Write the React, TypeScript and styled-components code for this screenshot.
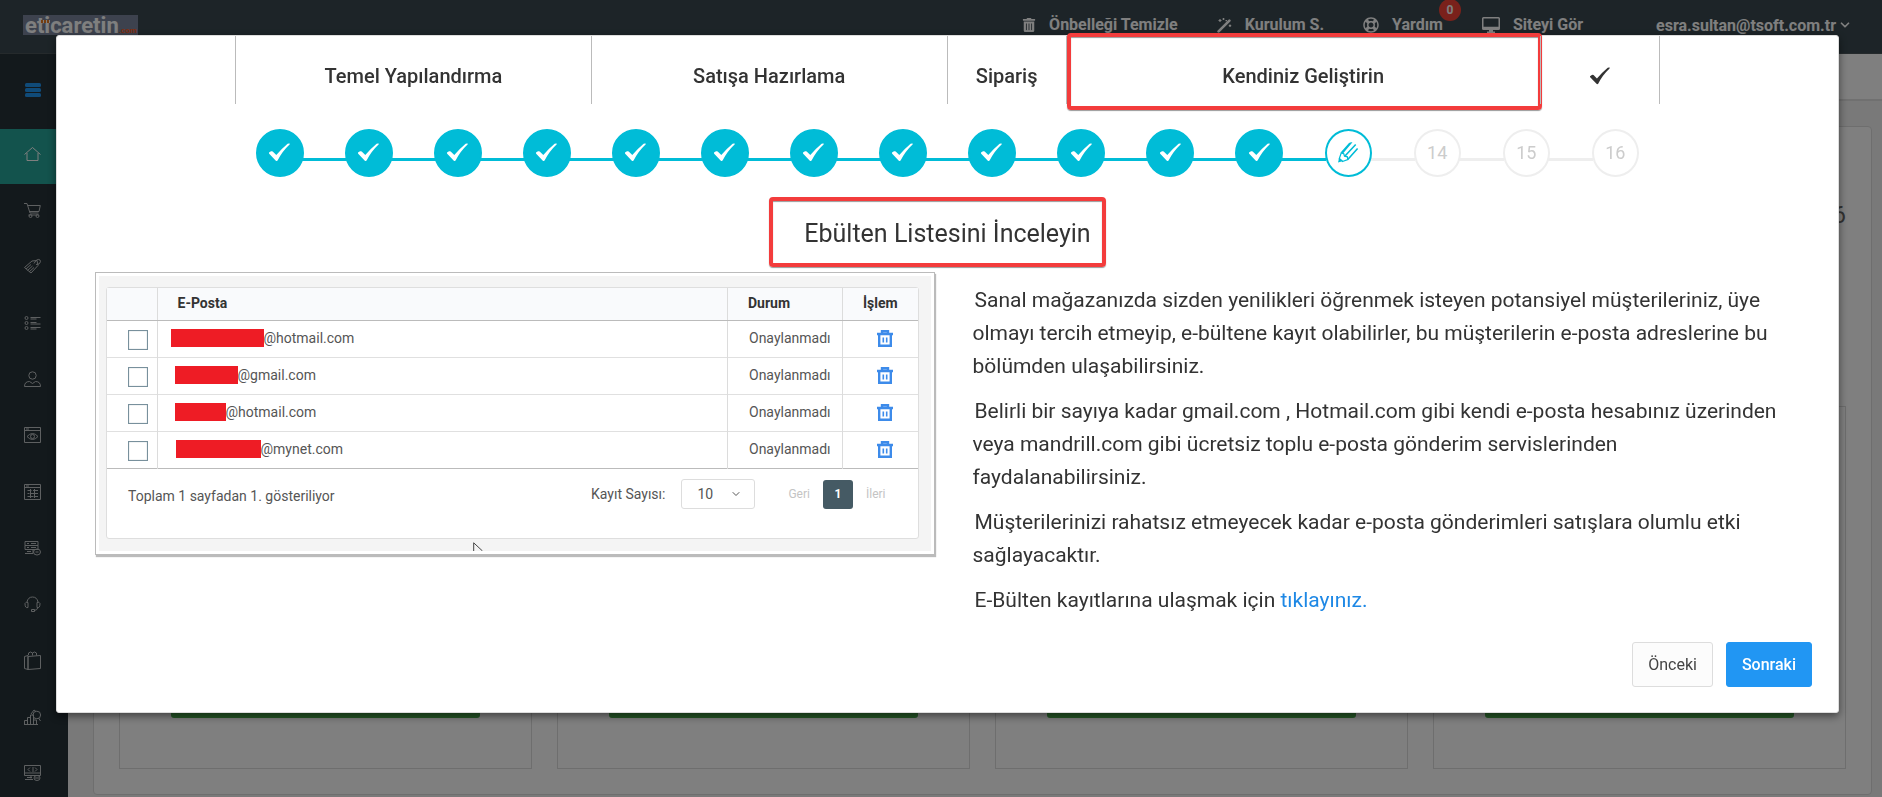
import React from 'react';
import styled, { createGlobalStyle, css } from 'styled-components';
import { FaRegLifeRing, FaTrashAlt } from 'react-icons/fa';
import { ChevronDown } from 'lucide-react';

const GlobalStyle = createGlobalStyle`
  *, *::before, *::after { box-sizing: border-box; }
  body {
    margin: 0;
    font-family: Roboto, "Noto Sans", sans-serif;
    font-size: 16px;
    color: #333;
    background: #f3f3f3;
  }
  button, input, select { font: inherit; }
  a { text-decoration: none; }
`;

/* ---------- Admin page ---------- */

const Page = styled.div`
  height: 100vh;
  overflow: hidden;
  display: flex;
  flex-direction: column;
`;

const Header = styled.header`
  flex: none;
  height: 54px;
  padding: 15px 30px 0 23px;
  display: flex;
  align-items: flex-start;
  justify-content: space-between;
  background: #3a4950;
  border-bottom: 1px solid #4a5459;
`;

const Logo = styled.a`
  position: relative;
  display: flex;
  align-items: baseline;
  width: 115px;
  height: 20px;
  padding-left: 2px;
  background: #7a859c;
  color: #fff;
  font-size: 22px;
  font-weight: 700;
  line-height: 22px;
`;

const LogoSuffix = styled.span`
  color: #ff5a20;
  font-size: 8px;
`;

const Awning = styled.span`
  position: absolute;
  top: 5px;
  left: 18px;
  width: 9px;
  height: 3px;
  background: repeating-linear-gradient(90deg, #ea7a20 0 2px, #fff 2px 3px);
`;

const HeaderNav = styled.nav`
  display: flex;
  align-items: center;
  gap: 39px;
  height: 20px;
`;

const HeaderLink = styled.a`
  position: relative;
  display: flex;
  align-items: center;
  gap: 13px;
  color: #fff;
  font-weight: 700;
  line-height: 20px;
  white-space: nowrap;
`;

const UserMenu = styled.button`
  display: flex;
  align-items: center;
  gap: 2px;
  margin-left: 34px;
  padding: 0;
  border: 0;
  background: none;
  color: #fff;
  font-weight: 700;
`;

const Badge = styled.span`
  position: absolute;
  top: -16px;
  right: -18px;
  width: 22px;
  height: 22px;
  border-radius: 50%;
  background: #f44336;
  font-size: 12px;
  line-height: 22px;
  text-align: center;
`;

const Columns = styled.div`
  flex: 1;
  min-height: 0;
  display: flex;
`;

const Sidebar = styled.nav`
  flex: 0 0 68px;
  overflow: hidden;
  background: #263238;
`;

const MenuToggle = styled.button`
  display: flex;
  align-items: center;
  width: 100%;
  height: 75px;
  padding: 0 25px 4px;
  border: 0;
  background: none;
  color: #2196f3;
`;

const SideLink = styled.a<{ $active?: boolean }>`
  display: flex;
  align-items: center;
  height: 55px;
  margin-bottom: 1px;
  padding: 0 24px 5px;
  color: #bcc0c2;
  ${p => p.$active && css`
    background: #26a69a;
    color: #fff;
  `}
  &:nth-of-type(3n) { margin-bottom: 2px; }
`;

const Main = styled.main`
  flex: 1;
  display: flex;
  flex-direction: column;
`;

const SubBar = styled.div`
  flex: none;
  height: 47px;
  background: #fff;
  border-bottom: 2px solid #e0e0e0;
`;

const Panel = styled.section`
  flex: 1;
  display: flex;
  flex-direction: column;
  margin: 25px 10px 2px 25px;
  padding: 0 25px 25px;
  background: #fff;
  border: 1px solid #dcdcdc;
  border-radius: 4px;
`;

const PanelTitle = styled.h1`
  height: 279px;
  margin: 0;
  padding: 73px 0 0;
  color: #666;
  font-size: 24px;
  font-weight: 400;
  line-height: 30px;
  text-align: right;
`;

const CardRow = styled.div`
  flex: 1;
  display: grid;
  grid-template-columns: repeat(4, 1fr);
  gap: 25px;
`;

const Card = styled.div`
  display: flex;
  align-items: flex-end;
  padding: 0 51px 50px;
  border: 1px solid #dcdcdc;
`;

const CardAction = styled.button`
  width: 100%;
  height: 40px;
  border: 0;
  border-radius: 3px;
  background: #4caf50;
`;

/* ---------- Setup wizard ---------- */

const Backdrop = styled.div`
  position: fixed;
  inset: 0;
  display: flex;
  align-items: flex-start;
  padding: 35px 43px 0 56px;
  background: rgba(0, 0, 0, 0.5);
`;

const Dialog = styled.section`
  flex: 1;
  min-width: 0;
  background: #fff;
  border: 1px solid #ddd;
  border-radius: 3px;
  box-shadow: 0 3px 9px rgba(0, 0, 0, 0.5);
`;

const Highlight = styled.span`
  position: absolute;
  border: 4px solid #f33c3c;
  border-radius: 4px;
  box-shadow: 0 1px 1px #999, inset 0 1px 1px #999;
  pointer-events: none;
`;

const TabHighlight = styled(Highlight)`
  inset: -3px -2px -6px 0;
`;

const TitleHighlight = styled(Highlight)`
  inset: -22px -15px -18px -35px;
`;

const Tabs = styled.div`
  display: flex;
  width: 80%;
  margin: 0 auto;
  border-right: 1px solid #bbb;
`;

const Tab = styled.button<{ $span: number }>`
  position: relative;
  flex: ${p => p.$span} 1 0;
  display: flex;
  align-items: center;
  justify-content: center;
  height: 68px;
  padding: 12px 0 0;
  border: 0;
  border-left: 1px solid #bbb;
  background: none;
  color: #333;
  font-size: 20px;
  font-weight: 500;
  white-space: nowrap;
`;

const Steps = styled.ol`
  display: flex;
  width: 80%;
  margin: 25px auto 0;
  padding: 0;
  list-style: none;
`;

type StepState = 'done' | 'active' | 'next';

const Step = styled.li<{ $state: StepState }>`
  position: relative;
  flex: 1;
  display: flex;
  justify-content: center;
  &:not(:last-child)::after {
    content: '';
    position: absolute;
    top: 29px;
    left: calc(50% + 22px);
    width: calc(100% - 44px);
    height: 3px;
    background: ${p => (p.$state === 'done' ? '#00bcd7' : '#eee')};
  }
`;

const StepDot = styled.button<{ $state: StepState }>`
  position: relative;
  z-index: 1;
  display: flex;
  align-items: center;
  justify-content: center;
  width: ${p => (p.$state === 'done' ? 48 : 47)}px;
  height: 48px;
  padding: 0 0 2px;
  border: 2px solid ${p => (p.$state === 'next' ? '#eee' : '#00bcd7')};
  border-radius: 50%;
  background: ${p => (p.$state === 'done' ? '#00bcd7' : '#fff')};
  color: ${p => ({ done: '#fff', active: '#00bcd7', next: '#ccc' })[p.$state]};
  font-size: 18px;
`;

const TitleRow = styled.div`
  display: flex;
  justify-content: center;
  padding: 42px 0 23px;
`;

const Title = styled.h2`
  position: relative;
  margin: 0;
  font-size: 25px;
  font-weight: 400;
  line-height: 30px;
`;

const Body = styled.div`
  display: grid;
  grid-template-columns: 1fr 1fr;
  align-items: start;
`;

const PreviewColumn = styled.div`
  padding: 0 13px 0 38px;
`;

const Preview = styled.figure`
  margin: 0;
  padding: 3px;
  border: 1px solid #bbb;
  box-shadow: 1px 2px 1px #bbb;
`;

const PreviewCanvas = styled.div`
  position: relative;
  padding: 11px 12px 12px 7px;
  background: #f4f4f4;
`;

const Pointer = styled.svg`
  position: absolute;
  left: 45%;
  bottom: 0;
`;

const Sheet = styled.div`
  background: #fff;
  border: 1px solid #dedede;
  border-radius: 3px;
`;

const Table = styled.table`
  width: 100%;
  border-collapse: collapse;
  table-layout: fixed;
  font-size: 14px;
  color: #555;
`;

const HeadCell = styled.th<{ $width?: number }>`
  width: ${p => (p.$width ? `${p.$width}px` : 'auto')};
  height: 32px;
  padding: 0 20px 2px;
  background: #f9fafc;
  border-bottom: 1px solid #bbb;
  color: #333;
  font-weight: 700;
  text-align: left;
  & + & { border-left: 1px solid #dcdcdc; }
`;

const Row = styled.tr`
  border-bottom: 1px solid #e0e0e0;
  &:last-child { border-bottom-color: #bbb; }
`;

const Cell = styled.td<{ $inset?: number }>`
  height: 37px;
  padding: 0 0 2px ${p => p.$inset ?? 21}px;
  & + & { border-left: 1px solid #dcdcdc; }
`;

const Email = styled.div`
  display: flex;
  align-items: center;
  line-height: 18px;
`;

const Redaction = styled.span<{ $width: number; $indent: number }>`
  width: ${p => p.$width}px;
  height: 18px;
  margin-left: ${p => p.$indent}px;
  background: #ee1c25;
`;

const RowCheck = styled.input`
  display: block;
  appearance: none;
  width: 20px;
  height: 20px;
  margin: 4px 0 0;
  border: 1px solid #78909c;
  box-shadow: inset 0 0 1px #78909c;
  background: #fff;
`;

const IconButton = styled.button`
  display: block;
  margin-top: 4px;
  padding: 0;
  border: 0;
  background: none;
  color: #3d8bea;
`;

const SheetFooter = styled.div`
  display: flex;
  align-items: center;
  height: 69px;
  padding: 0 32px 18px 21px;
  font-size: 14px;
  color: #555;
`;

const Summary = styled.span`
  flex: 1;
  padding-top: 4px;
`;

const SizeLabel = styled.label`
  display: flex;
  align-items: center;
  gap: 16px;
`;

const SizeBox = styled.span`
  position: relative;
  display: flex;
  align-items: center;
  svg { position: absolute; right: 13px; pointer-events: none; }
`;

const SizeSelect = styled.select`
  appearance: none;
  width: 74px;
  height: 30px;
  padding: 0 15px;
  border: 1px solid #ddd;
  border-radius: 3px;
  background: #fff;
  color: #555;
`;

const Pager = styled.div`
  display: flex;
  align-items: center;
  gap: 13px;
  margin-left: 33px;
`;

const PageButton = styled.button<{ $current?: boolean }>`
  height: 29px;
  padding: 0;
  border: 0;
  background: none;
  color: #c4c4c4;
  font-size: 12px;
  ${p => p.$current && css`
    width: 30px;
    border-radius: 3px;
    background: #455a64;
    color: #fff;
    font-weight: 700;
  `}
`;

const Copy = styled.div`
  padding: 12px 50px 0 25px;
  font-size: 21px;
  line-height: 33px;
  p { margin: 0 0 12px; text-indent: 2px; }
  a { color: #1e88e5; }
`;

const Actions = styled.footer`
  display: flex;
  justify-content: flex-end;
  gap: 13px;
  padding: 13px 26px 25px;
`;

const ActionButton = styled.button<{ $primary?: boolean }>`
  height: 45px;
  padding: 0 15px;
  border: 1px solid ${p => (p.$primary ? '#2196f3' : '#ddd')};
  border-radius: 3px;
  background: ${p => (p.$primary ? '#2196f3' : '#fcfcfc')};
  color: ${p => (p.$primary ? '#fff' : '#444')};
  font-weight: ${p => (p.$primary ? 500 : 400)};
`;

/* ---------- Icons ---------- */

const Check = ({ width = 21 }: { width?: number }) => (
  <svg width={width} viewBox="0 0 21 19" fill="currentColor" aria-hidden="true">
    <path d="M0 9.600 2 8.300Q3 7.900 3.700 8.500L7.300 12Q13 5.500 18.600.8 19.500.2 20.600.5 21 1 20.300 1.800 13 8.600 8.600 17.600 7.600 18.600 6.600 17.400L.2 10.700Q-.2 10 0 9.600Z" />
  </svg>
);

const Pencils = () => (
  <svg width="21" height="21" viewBox="0 0 21 21" fill="none" stroke="currentColor" aria-hidden="true">
    <path fill="currentColor" stroke="none" d="M0 20.500 1.300 15.500 5.200 19ZM2.600 10.600 11 1Q12.500-.1 14.500.3L5 11.400Z" />
    <path strokeWidth="1.200" d="M1 17.500 3.200 11l2.600.8.700 2.400 2.900.6.400 2.700-6 2.200" />
    <path strokeWidth="1.600" d="M7 14 17.700 2.500M9.800 17.500 19.600 6.500" />
  </svg>
);

const Wand = () => (
  <svg width="15" height="15" viewBox="0 0 15 15" aria-hidden="true">
    <path stroke="currentColor" strokeWidth="2.600" strokeLinecap="round" d="M1.600 13.400 12.400 2.600" />
    <path fill="none" stroke="currentColor" strokeWidth="1.200" d="M3 1v3M1.500 2.500h3M6.500 0v2M5.500 1h2M13 6.500v2.400M11.800 7.700h2.400M8.500 2.600h1.500" />
  </svg>
);

const Monitor = () => (
  <svg width="18" height="16" viewBox="0 0 18 16" aria-hidden="true">
    <path fillRule="evenodd" fill="currentColor" d="M1.500 0h15Q18 0 18 1.500v10q0 1.500-1.500 1.500H11v1.500h2V16H5v-1.500h2V13H1.500Q0 13 0 11.500v-10Q0 0 1.500 0ZM1.500 1.500v8.300h15V1.500Z" />
  </svg>
);

const Bin = () => (
  <svg width="16" height="17" viewBox="0 0 16 17" aria-hidden="true">
    <path fill="none" stroke="currentColor" strokeWidth="2.400" d="M0 4h16M5 4V1.200h6V4M2.200 4v11.800h11.600V4" />
    <path stroke="currentColor" strokeWidth="1.600" d="M6.300 7.500v5M9.700 7.500v5" />
  </svg>
);

const LineIcon = ({ d, height = 16 }: { d: string; height?: number }) => (
  <svg width="17" height={height} viewBox={`0 0 17 ${height}`} fill="none" stroke="currentColor" aria-hidden="true">
    <path d={d} />
  </svg>
);

const sideItems: { label: string; d: string; height?: number }[] = [
  { label: 'Ana Sayfa', d: 'M.5 8.500 8.500 1.500l8 7M3 7v7.500h11V7' },
  { label: 'Siparişler', d: 'M0 1.500h3l3 9.500h8.500M3.800 3.500h12.500L15 9.500H5.500M4.500 13h10M5 14a1.200 1.200 0 1 0 3 0a1.200 1.200 0 1 0-3 0M12 14a1.200 1.200 0 1 0 3 0a1.200 1.200 0 1 0-3 0' },
  { label: 'Ürünler', d: 'M.5 9.500 8 3l5-.5 1 5-7 7.500ZM2 11l5-4.500M3.500 12.500l5-4.500M5 14l5-4.500M10 5.500l2-3q2.500-2 4-.5t-1 4l-3 .5' },
  { label: 'Kategoriler', d: 'M1 3a1.500 1.500 0 1 0 3 0a1.500 1.500 0 1 0-3 0M1 8a1.500 1.500 0 1 0 3 0a1.500 1.500 0 1 0-3 0M1 13a1.500 1.500 0 1 0 3 0a1.500 1.500 0 1 0-3 0M6.500 2.500h10M6.500 4h6M6.500 7.500h6M6.500 9h10M6.500 12.500h10M6.500 14h6' },
  { label: 'Üyeler', d: 'M4.800 4.500a3.700 3.700 0 1 0 7.400 0a3.700 3.700 0 1 0-7.400 0M.5 15.500q0-5 5-5l3 2 3-2q5 0 5 5Z' },
  { label: 'Vitrin', d: 'M.5.500h16v15H.5ZM.5 3.500h16M3 9.500q5.500-6 11 0-5.500 6-11 0ZM6.500 9.500a2 2 0 1 0 4 0a2 2 0 1 0-4 0M2 2h3' },
  { label: 'Tasarım', d: 'M.5.500h16v15H.5ZM.5 3.500h16M3.500 6.500h4M9 6.500h5M3.500 9.500h2M7 9.500h7M3.500 12.500h6M11 12.500h3M6.500 5v9M10.500 5v9M2 2h3' },
  { label: 'Veriler', d: 'M1 1.500h13v4H1ZM1 5.500h13v4H1ZM1 9.500h8v4H1M3 3.500h2M7 3.500h5M3 7.500h2M7 7.500h5M3 11.500h4M9.500 12a3.500 3 0 1 0 7 0a3.500 3 0 1 0-7 0M11.500 12h3' },
  { label: 'Destek', d: 'M3 6q1-5 5.500-5T14 6M1 7.500q1-2 3-1v5q-3 1-3-4ZM16 7.500q-1-2-3-1v5q3 1 3-4ZM14 11.500q-1 3-4 3M7.500 13.500h3v2h-3Z' },
  { label: 'Uygulamalar', height: 20, d: 'M.5 5.500 4 4.500v14L.5 17.500ZM4 5.500l12.500-1v13L4 18.500ZM4.500 4V2q2-2 4 0v2.500M8.500 4V2q2-2 4 0v2.500' },
  { label: 'Raporlar', d: 'M.5 15.500v-4h3v4M3.500 15.500v-7h3v7M6.500 15.500V6h3v9.500M9.500 15.500V11h3v4.500ZM0 15.500h14M9 6a3.800 3.800 0 1 0 7.600 0a3.800 3.800 0 1 0-7.600 0M14.500 9l2 3M7 5l3-4 2 1.500' },
  { label: 'Muhasebe', d: 'M.5.500h16v10H.5ZM.5 8h16M6 2.500 4 4.500l2 2M11 2.500l2 2-2 2M9 2v5M7 10.500v3M1 14.500h8M3 12.500h5M10 13a3 2.500 0 1 0 6 0a3 2.500 0 1 0-6 0M11 13h4' },
];

const tabs: { label: React.ReactNode; name: string; span: number; marked?: boolean }[] = [
  { name: 'Temel Yapılandırma', label: 'Temel Yapılandırma', span: 3 },
  { name: 'Satışa Hazırlama', label: 'Satışa Hazırlama', span: 3 },
  { name: 'Sipariş', label: 'Sipariş', span: 1 },
  { name: 'Kendiniz Geliştirin', label: 'Kendiniz Geliştirin', span: 4, marked: true },
  { name: 'Tamamlandı', label: <Check width={20} />, span: 1 },
];

const emails = [
  { domain: '@hotmail.com', width: 93, indent: 0 },
  { domain: '@gmail.com', width: 63, indent: 4 },
  { domain: '@hotmail.com', width: 51, indent: 4 },
  { domain: '@mynet.com', width: 85, indent: 5 },
];

const ACTIVE_STEP = 13;
const stepState = (n: number): StepState => (n < ACTIVE_STEP ? 'done' : n === ACTIVE_STEP ? 'active' : 'next');

export default function App() {
  return (
    <>
      <GlobalStyle />
      <Page>
        <Header>
          <Logo href="#">
            eticaretin<LogoSuffix>.com</LogoSuffix>
            <Awning />
          </Logo>
          <HeaderNav>
            <HeaderLink href="#"><FaTrashAlt size={14} />Önbelleği Temizle</HeaderLink>
            <HeaderLink href="#"><Wand />Kurulum S.</HeaderLink>
            <HeaderLink href="#"><FaRegLifeRing size={16} />Yardım<Badge>0</Badge></HeaderLink>
            <HeaderLink href="#"><Monitor />Siteyi Gör</HeaderLink>
            <UserMenu>esra.sultan@tsoft.com.tr<ChevronDown size={14} strokeWidth={3} /></UserMenu>
          </HeaderNav>
        </Header>
        <Columns>
          <Sidebar>
            <MenuToggle aria-label="Menü">
              <svg width="16" height="14" viewBox="0 0 16 14" fill="currentColor" aria-hidden="true">
                <rect width="16" height="4" rx="1.500" />
                <rect y="5" width="16" height="4" rx="1.500" />
                <rect y="10" width="16" height="4" rx="1.500" />
              </svg>
            </MenuToggle>
            {sideItems.map((item, i) => (
              <SideLink key={item.label} href="#" aria-label={item.label} $active={i === 0}>
                <LineIcon d={item.d} height={item.height} />
              </SideLink>
            ))}
          </Sidebar>
          <Main>
            <SubBar />
            <Panel>
              <PanelTitle>6</PanelTitle>
              <CardRow>
                {[1, 2, 3, 4].map(n => (
                  <Card key={n}><CardAction aria-label={`Kart ${n}`} /></Card>
                ))}
              </CardRow>
            </Panel>
          </Main>
        </Columns>
      </Page>

      <Backdrop>
        <Dialog role="dialog" aria-labelledby="wizard-title">
          <Tabs>
            {tabs.map(tab => (
              <Tab key={tab.name} $span={tab.span} aria-label={tab.name}>
                {tab.label}
                {tab.marked && <TabHighlight />}
              </Tab>
            ))}
          </Tabs>
          <Steps>
            {Array.from({ length: 16 }, (_, i) => i + 1).map(n => {
              const state = stepState(n);
              return (
                <Step key={n} $state={state}>
                  <StepDot $state={state} aria-label={`Adım ${n}`}>
                    {state === 'done' ? <Check /> : state === 'active' ? <Pencils /> : n}
                  </StepDot>
                </Step>
              );
            })}
          </Steps>
          <TitleRow>
            <Title id="wizard-title">Ebülten Listesini İnceleyin<TitleHighlight /></Title>
          </TitleRow>
          <Body>
            <PreviewColumn>
              <Preview>
                <PreviewCanvas>
                  <Sheet>
                    <Table>
                      <thead>
                        <tr>
                          <HeadCell $width={50} aria-label="Seç" />
                          <HeadCell>E-Posta</HeadCell>
                          <HeadCell $width={115}>Durum</HeadCell>
                          <HeadCell $width={75}>İşlem</HeadCell>
                        </tr>
                      </thead>
                      <tbody>
                        {emails.map((mail, i) => (
                          <Row key={i}>
                            <Cell><RowCheck type="checkbox" aria-label={`Satır ${i + 1}`} /></Cell>
                            <Cell $inset={13}>
                              <Email><Redaction $width={mail.width} $indent={mail.indent} />{mail.domain}</Email>
                            </Cell>
                            <Cell>Onaylanmadı</Cell>
                            <Cell $inset={34}><IconButton aria-label="Sil"><Bin /></IconButton></Cell>
                          </Row>
                        ))}
                      </tbody>
                    </Table>
                    <SheetFooter>
                      <Summary>Toplam 1 sayfadan 1. gösteriliyor</Summary>
                      <SizeLabel>
                        Kayıt Sayısı:
                        <SizeBox>
                          <SizeSelect defaultValue="10"><option>10</option></SizeSelect>
                          <ChevronDown size={12} />
                        </SizeBox>
                      </SizeLabel>
                      <Pager>
                        <PageButton>Geri</PageButton>
                        <PageButton $current>1</PageButton>
                        <PageButton>İleri</PageButton>
                      </Pager>
                    </SheetFooter>
                  </Sheet>
                  <Pointer width="10" height="9" viewBox="0 0 10 9" fill="none" stroke="#444" aria-hidden="true">
                    <path d="M.7 9V.8L9.500 9" />
                  </Pointer>
                </PreviewCanvas>
              </Preview>
            </PreviewColumn>
            <Copy>
              <p>Sanal mağazanızda sizden yenilikleri öğrenmek isteyen potansiyel müşterileriniz, üye olmayı tercih etmeyip, e-bültene kayıt olabilirler, bu müşterilerin e-posta adreslerine bu bölümden ulaşabilirsiniz.</p>
              <p>Belirli bir sayıya kadar gmail.com , Hotmail.com gibi kendi e-posta hesabınız üzerinden veya mandrill.com gibi ücretsiz toplu e-posta gönderim servislerinden faydalanabilirsiniz.</p>
              <p>Müşterilerinizi rahatsız etmeyecek kadar e-posta gönderimleri satışlara olumlu etki sağlayacaktır.</p>
              <p>E-Bülten kayıtlarına ulaşmak için <a href="#">tıklayınız.</a></p>
            </Copy>
          </Body>
          <Actions>
            <ActionButton>Önceki</ActionButton>
            <ActionButton $primary>Sonraki</ActionButton>
          </Actions>
        </Dialog>
      </Backdrop>
    </>
  );
}
